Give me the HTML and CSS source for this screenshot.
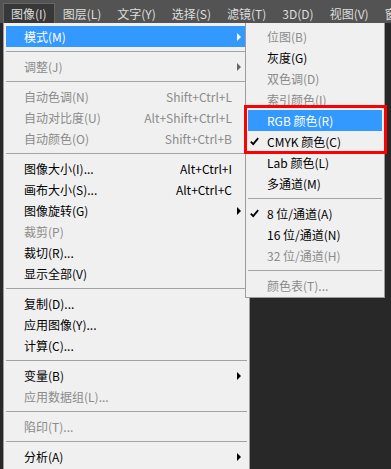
FILE: index.html
```html
<!DOCTYPE html>
<html lang="zh-CN">
<head>
    <meta charset="UTF-8">
    <meta name="viewport" content="width=device-width, initial-scale=1.0">
    <title>图像菜单</title>
    <link rel="stylesheet" href="styles.css">
</head>
<body>
    <div class="menubar">
        <span class="menubar-item active">图像(I)</span>
        <span class="menubar-item">图层(L)</span>
        <span class="menubar-item">文字(Y)</span>
        <span class="menubar-item">选择(S)</span>
        <span class="menubar-item">滤镜(T)</span>
        <span class="menubar-item">3D(D)</span>
        <span class="menubar-item">视图(V)</span>
        <span class="menubar-item">窗口(W)</span>
    </div>

    <div class="workspace">
        <ul class="menu main-menu">
            <li class="item hot"><span class="check"></span><span class="label">模式(M)</span><span class="arrow"></span></li>
            <li class="sep"></li>
            <li class="item disabled"><span class="check"></span><span class="label">调整(J)</span><span class="arrow"></span></li>
            <li class="sep"></li>
            <li class="item disabled"><span class="check"></span><span class="label">自动色调(N)</span><span class="key">Shift+Ctrl+L</span></li>
            <li class="item disabled"><span class="check"></span><span class="label">自动对比度(U)</span><span class="key">Alt+Shift+Ctrl+L</span></li>
            <li class="item disabled"><span class="check"></span><span class="label">自动颜色(O)</span><span class="key">Shift+Ctrl+B</span></li>
            <li class="sep"></li>
            <li class="item"><span class="check"></span><span class="label">图像大小(I)...</span><span class="key">Alt+Ctrl+I</span></li>
            <li class="item"><span class="check"></span><span class="label">画布大小(S)...</span><span class="key">Alt+Ctrl+C</span></li>
            <li class="item"><span class="check"></span><span class="label">图像旋转(G)</span><span class="arrow"></span></li>
            <li class="item disabled"><span class="check"></span><span class="label">裁剪(P)</span></li>
            <li class="item"><span class="check"></span><span class="label">裁切(R)...</span></li>
            <li class="item"><span class="check"></span><span class="label">显示全部(V)</span></li>
            <li class="sep"></li>
            <li class="item"><span class="check"></span><span class="label">复制(D)...</span></li>
            <li class="item"><span class="check"></span><span class="label">应用图像(Y)...</span></li>
            <li class="item"><span class="check"></span><span class="label">计算(C)...</span></li>
            <li class="sep"></li>
            <li class="item"><span class="check"></span><span class="label">变量(B)</span><span class="arrow"></span></li>
            <li class="item disabled"><span class="check"></span><span class="label">应用数据组(L)...</span></li>
            <li class="sep"></li>
            <li class="item disabled"><span class="check"></span><span class="label">陷印(T)...</span></li>
            <li class="sep"></li>
            <li class="item"><span class="check"></span><span class="label">分析(A)</span><span class="arrow"></span></li>
        </ul>

        <ul class="menu sub-menu">
            <li class="item disabled"><span class="check"></span><span class="label">位图(B)</span></li>
            <li class="item"><span class="check"></span><span class="label">灰度(G)</span></li>
            <li class="item disabled"><span class="check"></span><span class="label">双色调(D)</span></li>
            <li class="item disabled"><span class="check"></span><span class="label">索引颜色(I)</span></li>
            <li class="item hot"><span class="check"></span><span class="label">RGB 颜色(R)</span></li>
            <li class="item"><span class="check"><svg width="9" height="9" viewBox="0 0 9 9"><path d="M0.8 4.6 L3.2 7.2 L8.2 1.2" fill="none" stroke="#000" stroke-width="1.8"/></svg></span><span class="label">CMYK 颜色(C)</span></li>
            <li class="item"><span class="check"></span><span class="label">Lab 颜色(L)</span></li>
            <li class="item"><span class="check"></span><span class="label">多通道(M)</span></li>
            <li class="sep"></li>
            <li class="item"><span class="check"><svg width="9" height="9" viewBox="0 0 9 9"><path d="M0.8 4.6 L3.2 7.2 L8.2 1.2" fill="none" stroke="#000" stroke-width="1.8"/></svg></span><span class="label">8 位/通道(A)</span></li>
            <li class="item"><span class="check"></span><span class="label">16 位/通道(N)</span></li>
            <li class="item disabled"><span class="check"></span><span class="label">32 位/通道(H)</span></li>
            <li class="sep"></li>
            <li class="item disabled"><span class="check"></span><span class="label">颜色表(T)...</span></li>
        </ul>

        <div class="callout"></div>
    </div>
</body>
</html>
```

FILE: styles.css
```css
body {
        margin: 0;
        width: 391px;
        height: 469px;
        overflow: hidden;
        background-color: #282828;
        font-family: "Noto Sans CJK SC", "Noto Sans", sans-serif;
        font-size: 12px;
}

.menubar {
        height: 23px;
        background-color: #535353;
        display: flex;
        align-items: flex-end;
        padding-left: 3px;
        white-space: nowrap;
        overflow: hidden;
        color: #dedede;
}

.menubar-item {
        height: 19px;
        line-height: 19px;
        padding: 0 7px 0 7px;
        border: 1px solid transparent;
        border-bottom: none;
}

.menubar-item.active {
        background-color: #383838;
        border-color: #666666;
}

.workspace {
        position: relative;
        height: 446px;
}

.menu {
        position: absolute;
        top: 0;
        margin: 0;
        padding: 3px 0 2px 0;
        list-style: none;
        background-color: #f0f0f0;
        border: 1px solid #9c9c9c;
        border-top: none;
        box-sizing: border-box;
}

.main-menu {
        left: 3px;
        width: 247px;
        height: 460px;
}

.sub-menu {
        left: 245px;
        width: 140px;
        height: 275px;
}

.item {
        height: 21px;
        margin: 0 2px;
        padding-right: 15px;
        display: flex;
        align-items: center;
        color: #000000;
        white-space: nowrap;
}

.item.disabled {
        color: #8b8b8b;
}

.item.hot {
        background-color: #3399ff;
        color: #ffffff;
}

.check {
        width: 18px;
        flex-shrink: 0;
        display: flex;
        align-items: center;
        padding-left: 2px;
        box-sizing: border-box;
}

.sub-menu .check {
        width: 19px;
}

.key {
        margin-left: auto;
}

.arrow {
        margin-left: auto;
        margin-right: -9px;
        width: 0;
        height: 0;
        border-left: 4px solid #000000;
        border-top: 4px solid transparent;
        border-bottom: 4px solid transparent;
}

.item.disabled .arrow {
        border-left-color: #666666;
}

.item.hot .arrow {
        border-left-color: #ffffff;
}

.sep {
        height: 1px;
        margin: 4px 2px;
        background-color: #a3a3a3;
}

.callout {
        position: absolute;
        left: 244px;
        top: 82px;
        width: 143px;
        height: 49px;
        border: 3px solid #ff0000;
        box-sizing: border-box;
}
```
